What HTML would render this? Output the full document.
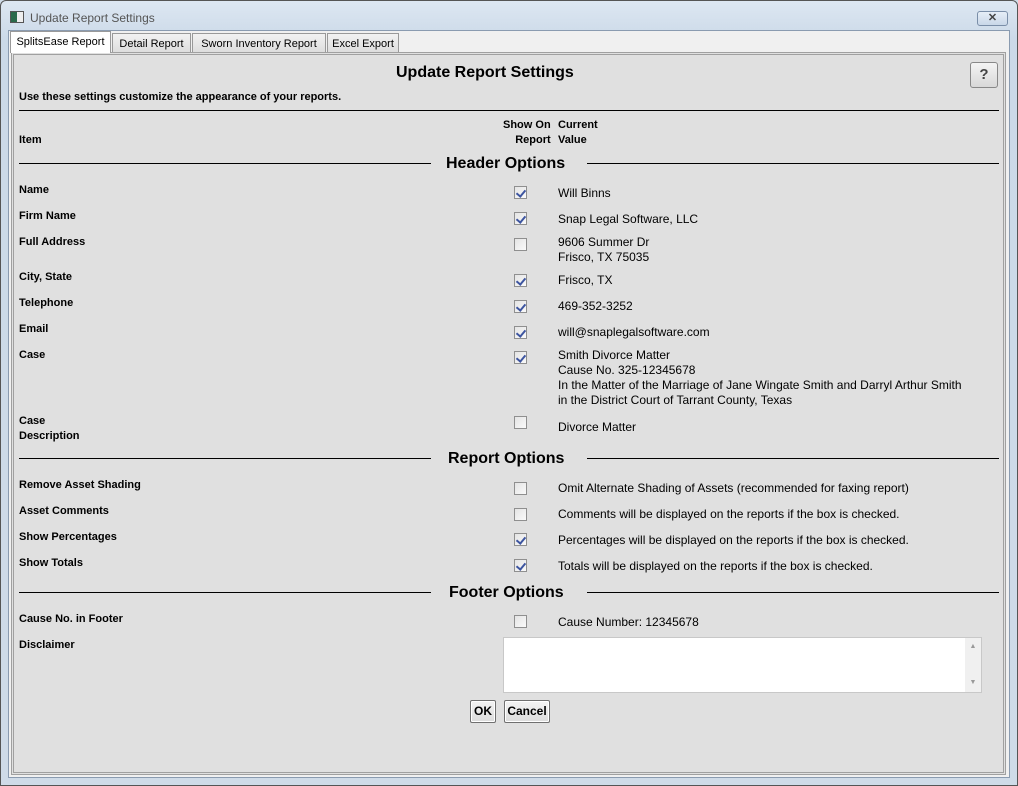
<!DOCTYPE html>
<html><head><meta charset="utf-8"><style>
*{margin:0;padding:0;box-sizing:border-box}
body{width:1018px;height:786px;background:#cfdbe8;font-family:"Liberation Sans",sans-serif;font-size:12px;color:#000;position:relative;overflow:hidden}
.a{position:absolute;white-space:nowrap}
.win{position:absolute;left:0;top:0;width:1018px;height:786px;border:1px solid #555;border-radius:6px 6px 0 0;background:linear-gradient(#dde7f2,#cbd9e8 40px,#cfdbe8)}
.client{position:absolute;left:8px;top:30px;width:1002px;height:748px;background:#f0f0f0;border:1px solid #8a9bb0}
.panel{position:absolute;left:11px;top:52px;width:995px;height:723px;background:#e0e0e0;border:3px double #a0a0a0}
.tab{position:absolute;top:33px;height:20px;border:1px solid #999;border-bottom:none;background:linear-gradient(#f2f2f2,#dcdcdc);font-size:11px;padding:4px 0 0;text-align:center;white-space:nowrap;overflow:hidden;color:#000}
.b{font-weight:bold;font-size:11px}
.cb{position:absolute;left:514px;width:13px;height:13px;border:1px solid #8f8f8f;background:linear-gradient(135deg,#e4e4e4,#fafafa)}
.cb.c::after{content:"";position:absolute;left:3px;top:1px;width:4px;height:7px;border:solid #3d55a0;border-width:0 2px 2px 0;transform:rotate(40deg)}
.hl{position:absolute;height:1px;background:#000}
.sec{position:absolute;font-weight:bold;font-size:16px;white-space:nowrap}
.btn{position:absolute;border:1px solid #707070;border-radius:2px;background:linear-gradient(#f4f4f4,#dcdcdc);font-weight:bold;font-size:12px;text-align:center;line-height:20px;box-shadow:0 0 0 1px #fff inset}
</style></head><body>
<div class="win"></div>
<div class="a" style="left:10px;top:11px;width:14px;height:12px;border:1px solid #555;background:linear-gradient(90deg,#2a6a4a 50%,#eee 50%)"></div>
<div class="a" style="left:30px;top:11px;font-size:12px;color:#555">Update Report Settings</div>
<div class="a" style="left:977px;top:11px;width:31px;height:15px;border:1px solid #7a8ea8;border-radius:3px;background:linear-gradient(#e6eef7,#c9d7e8);text-align:center;font-size:11px;line-height:13px;color:#444;font-weight:bold">✕</div>
<div class="client"></div>
<div class="tab" style="left:10px;width:101px;top:31px;height:22px;background:#fff;padding-top:4px;z-index:2">SplitsEase Report</div>
<div class="tab" style="left:112px;width:79px">Detail Report</div>
<div class="tab" style="left:192px;width:134px">Sworn Inventory Report</div>
<div class="tab" style="left:327px;width:72px">Excel Export</div>
<div class="panel"></div>
<div class="a" style="left:396px;top:64px;font-weight:bold;font-size:16px">Update Report Settings</div>
<div class="a" style="left:970px;top:62px;width:28px;height:26px;border:1px solid #888;border-radius:3px;background:linear-gradient(#f4f4f4,#d8d8d8);text-align:center;font-weight:bold;font-size:15px;line-height:24px;color:#444">?</div>
<div class="a b" style="left:19px;top:91px">Use these settings customize the appearance of your reports.</div>
<div class="hl" style="left:19px;top:110px;width:980px"></div>
<div class="a b" style="left:19px;top:134px">Item</div>
<div class="a b" style="left:503px;top:118px;text-align:right;line-height:15px">Show On<br>Report</div>
<div class="a b" style="left:558px;top:118px;line-height:15px">Current<br>Value</div>

<div class="hl" style="left:19px;top:163px;width:412px"></div><div class="sec" style="left:446px;top:155px">Header Options</div><div class="hl" style="left:587px;top:163px;width:412px"></div>
<div class="a b" style="left:19px;top:184px">Name</div><div class="cb c" style="top:186px"></div><div class="a" style="left:558px;top:186px">Will Binns</div>
<div class="a b" style="left:19px;top:210px">Firm Name</div><div class="cb c" style="top:212px"></div><div class="a" style="left:558px;top:212px">Snap Legal Software, LLC</div>
<div class="a b" style="left:19px;top:236px">Full Address</div><div class="cb" style="top:238px"></div><div class="a" style="left:558px;top:235px;line-height:15px">9606 Summer Dr<br>Frisco, TX 75035</div>
<div class="a b" style="left:19px;top:271px">City, State</div><div class="cb c" style="top:274px"></div><div class="a" style="left:558px;top:273px">Frisco, TX</div>
<div class="a b" style="left:19px;top:297px">Telephone</div><div class="cb c" style="top:300px"></div><div class="a" style="left:558px;top:299px">469-352-3252</div>
<div class="a b" style="left:19px;top:323px">Email</div><div class="cb c" style="top:326px"></div><div class="a" style="left:558px;top:325px">will@snaplegalsoftware.com</div>
<div class="a b" style="left:19px;top:349px">Case</div><div class="cb c" style="top:351px"></div><div class="a" style="left:558px;top:348px;line-height:15px">Smith Divorce Matter<br>Cause No. 325-12345678<br>In the Matter of the Marriage of Jane Wingate Smith and Darryl Arthur Smith<br>in the District Court of Tarrant County, Texas</div>
<div class="a b" style="left:19px;top:414px;line-height:15px">Case<br>Description</div><div class="cb" style="top:416px"></div><div class="a" style="left:558px;top:420px">Divorce Matter</div>

<div class="hl" style="left:19px;top:458px;width:412px"></div><div class="sec" style="left:448px;top:450px">Report Options</div><div class="hl" style="left:587px;top:458px;width:412px"></div>
<div class="a b" style="left:19px;top:479px">Remove Asset Shading</div><div class="cb" style="top:482px"></div><div class="a" style="left:558px;top:481px">Omit Alternate Shading of Assets (recommended for faxing report)</div>
<div class="a b" style="left:19px;top:505px">Asset Comments</div><div class="cb" style="top:508px"></div><div class="a" style="left:558px;top:507px">Comments will be displayed on the reports if the box is checked.</div>
<div class="a b" style="left:19px;top:531px">Show Percentages</div><div class="cb c" style="top:533px"></div><div class="a" style="left:558px;top:533px">Percentages will be displayed on the reports if the box is checked.</div>
<div class="a b" style="left:19px;top:557px">Show Totals</div><div class="cb c" style="top:559px"></div><div class="a" style="left:558px;top:559px">Totals will be displayed on the reports if the box is checked.</div>

<div class="hl" style="left:19px;top:592px;width:412px"></div><div class="sec" style="left:449px;top:584px">Footer Options</div><div class="hl" style="left:587px;top:592px;width:412px"></div>
<div class="a b" style="left:19px;top:613px">Cause No. in Footer</div><div class="cb" style="top:615px"></div><div class="a" style="left:558px;top:615px">Cause Number: 12345678</div>
<div class="a b" style="left:19px;top:639px">Disclaimer</div>
<div class="a" style="left:503px;top:637px;width:479px;height:56px;background:#fff;border:1px solid #c8c8c8"><div style="position:absolute;right:0;top:0;width:16px;height:54px;background:#f0f0f0;font-size:7px;color:#999;text-align:center;line-height:18px">▲<br><br>▼</div></div>
<div class="btn" style="left:470px;top:700px;width:26px;height:23px">OK</div>
<div class="btn" style="left:504px;top:700px;width:46px;height:23px">Cancel</div>
</body></html>
